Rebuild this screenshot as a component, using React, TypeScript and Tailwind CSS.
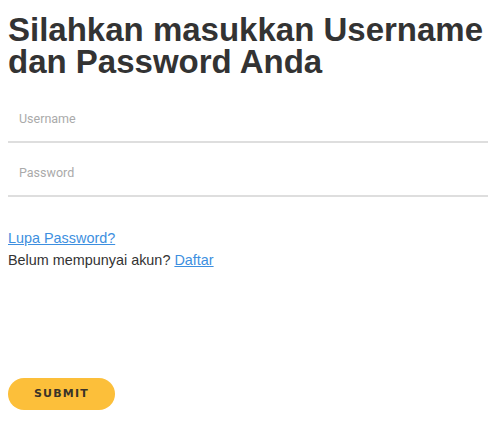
import React from "react";

export default function App() {
  return (
    <div className="w-[500px] h-[423px] bg-white pl-2 pt-[14px] font-['Liberation_Sans',Arial,sans-serif] text-[#333]">
      <h1 className="text-[33px] font-bold text-[#333] font-['Liberation_Sans',Arial,sans-serif] whitespace-nowrap flex flex-col">
        <span className="block h-[32px] leading-[32px]">Silahkan masukkan Username</span>
        <span className="block h-[32px] leading-[32px]">dan Password Anda</span>
      </h1>
      <div className="mt-[11px] w-[480px] flex flex-col font-['Roboto',sans-serif]">
        <input
          type="text"
          placeholder="Username"
          className="h-[54px] pt-[6px] pl-[11px] border-b-2 border-[#dedede] text-[12.5px] outline-none placeholder:text-[#aaa]"
        />
        <input
          type="password"
          placeholder="Password"
          className="h-[54px] pt-[6px] pl-[11px] border-b-2 border-[#dedede] text-[12.5px] outline-none placeholder:text-[#aaa]"
        />
      </div>
      <div className="mt-[30px] text-[14.4px] leading-[22px] text-[#333]">
        <a href="#" className="text-[#3d8fe0] underline">Lupa Password?</a>
        <div>
          Belum mempunyai akun? <a href="#" className="text-[#3d8fe0] underline">Daftar</a>
        </div>
      </div>
      <button className="mt-[107px] w-[107px] h-[32px] rounded-full bg-[#fcbf3a] text-[11px] font-bold tracking-[1.2px] text-[#3a3328] font-['DejaVu_Sans',sans-serif] flex items-center justify-center">
        SUBMIT
      </button>
    </div>
  );
}
